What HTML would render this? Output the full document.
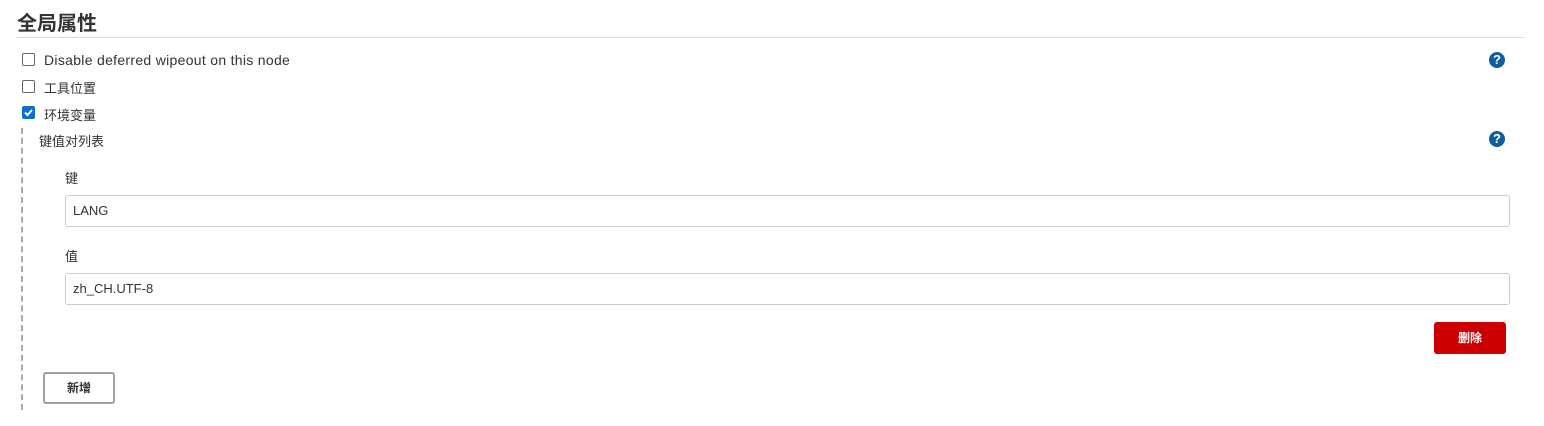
<!DOCTYPE html>
<html><head><meta charset="utf-8"><style>
body{margin:0;background:#fff;font-family:"Liberation Sans","Noto Sans CJK SC",sans-serif;color:#333;font-size:13px;width:1544px;height:426px;position:relative;overflow:hidden}
.a{position:absolute}
.cb{position:absolute;width:11px;height:11px;border:1px solid #666;border-radius:2px;background:#fff}
.cb.on{background:#0b6fd3;border-color:#0b6fd3}
.help{position:absolute;width:16px;height:16px;border-radius:50%;background:#0f5f9c;color:#fff;font-weight:bold;font-size:13px;line-height:16px;text-align:center}
.inp{position:absolute;left:65px;width:1445px;height:32px;border:1px solid #ccc;border-radius:3px;box-sizing:border-box;padding-left:7px;line-height:30px;font-size:13px;color:#333}
</style></head><body>
<div class="a" style="left:17px;top:7px;font-size:20px;font-weight:bold;color:#333">全局属性</div>
<div class="a" style="left:17px;top:37px;width:1508px;height:1px;background:#ddd"></div>
<div class="cb" style="left:22px;top:53px"></div>
<div class="a" style="left:44px;top:52px;font-size:14px;letter-spacing:0.3px">Disable deferred wipeout on this node</div>
<div class="cb" style="left:22px;top:80px"></div>
<div class="a" style="left:44px;top:78px">工具位置</div>
<div class="cb on" style="left:22px;top:106px"><svg width="11" height="11" style="position:absolute;left:0;top:0"><path d="M2 5.5l2.5 2.5 4.5-5" stroke="#fff" stroke-width="2" fill="none"/></svg></div>
<div class="a" style="left:44px;top:105px">环境变量</div>
<div class="a" style="left:21px;top:128px;height:282px;border-left:2px dashed #aaa"></div>
<div class="a" style="left:39px;top:131px">键值对列表</div>
<div class="help" style="left:1489px;top:52px">?</div>
<div class="help" style="left:1489px;top:131px">?</div>
<div class="a" style="left:65px;top:168px">键</div>
<div class="inp" style="top:195px">LANG</div>
<div class="a" style="left:65px;top:246px">值</div>
<div class="inp" style="top:273px">zh_CH.UTF-8</div>
<div class="a" style="left:1434px;top:322px;width:72px;height:32px;background:#cc0000;border-radius:3px;color:#fff;font-weight:bold;font-size:12px;text-align:center;line-height:32px">删除</div>
<div class="a" style="left:43px;top:372px;width:72px;height:32px;box-sizing:border-box;border:2px solid #9aa3ab;border-radius:3px;font-weight:bold;font-size:12px;text-align:center;line-height:28px">新增</div>
</body></html>
